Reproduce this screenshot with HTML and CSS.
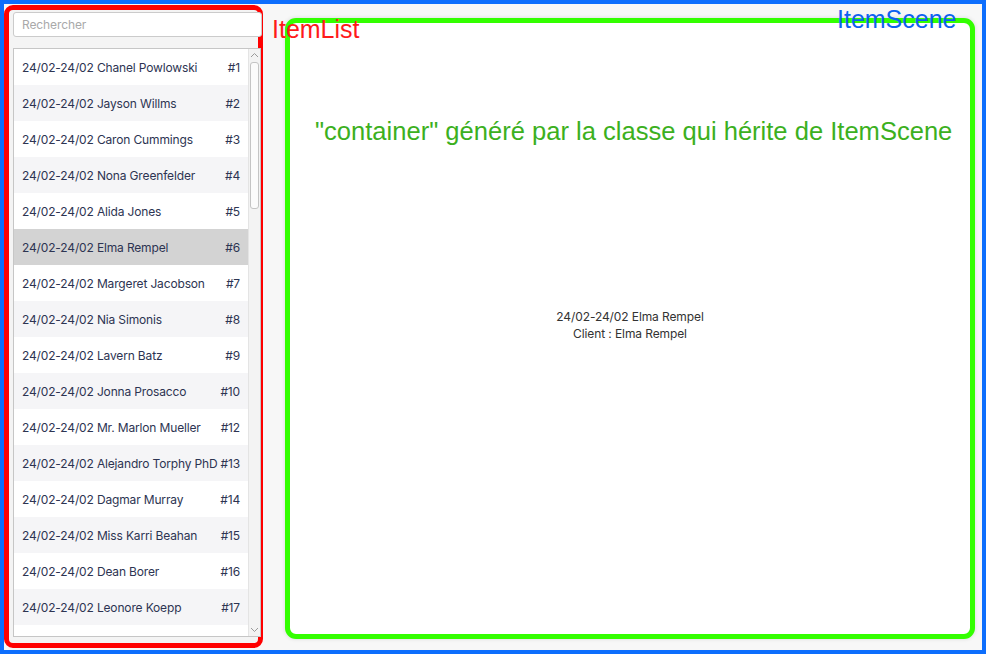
FILE: index.html
```html
<!DOCTYPE html>
<html lang="fr">
<head>
<meta charset="utf-8">
<title>ItemList / ItemScene</title>
<link rel="stylesheet" href="styles.css">
</head>
<body>
<div class="app">
  <aside class="itemlist">
    <div class="search"><span class="placeholder">Rechercher</span></div>
    <div class="listbox">
      <ul class="rows">
        <li class="row"><span class="name">24/02-24/02 Chanel Powlowski</span><span class="num">#1</span></li>
        <li class="row alt"><span class="name">24/02-24/02 Jayson Willms</span><span class="num">#2</span></li>
        <li class="row"><span class="name">24/02-24/02 Caron Cummings</span><span class="num">#3</span></li>
        <li class="row alt"><span class="name">24/02-24/02 Nona Greenfelder</span><span class="num">#4</span></li>
        <li class="row"><span class="name">24/02-24/02 Alida Jones</span><span class="num">#5</span></li>
        <li class="row selected"><span class="name">24/02-24/02 Elma Rempel</span><span class="num">#6</span></li>
        <li class="row"><span class="name">24/02-24/02 Margeret Jacobson</span><span class="num">#7</span></li>
        <li class="row alt"><span class="name">24/02-24/02 Nia Simonis</span><span class="num">#8</span></li>
        <li class="row"><span class="name">24/02-24/02 Lavern Batz</span><span class="num">#9</span></li>
        <li class="row alt"><span class="name">24/02-24/02 Jonna Prosacco</span><span class="num">#10</span></li>
        <li class="row"><span class="name">24/02-24/02 Mr. Marlon Mueller</span><span class="num">#12</span></li>
        <li class="row alt"><span class="name">24/02-24/02 Alejandro Torphy PhD</span><span class="num">#13</span></li>
        <li class="row"><span class="name">24/02-24/02 Dagmar Murray</span><span class="num">#14</span></li>
        <li class="row alt"><span class="name">24/02-24/02 Miss Karri Beahan</span><span class="num">#15</span></li>
        <li class="row"><span class="name">24/02-24/02 Dean Borer</span><span class="num">#16</span></li>
        <li class="row alt"><span class="name">24/02-24/02 Leonore Koepp</span><span class="num">#17</span></li>
      </ul>
      <div class="scrollbar">
        <svg class="arrow" width="9" height="6" viewBox="0 0 9 6"><path d="M1 5 L4.5 1.5 L8 5" fill="none" stroke="#9a9a9a" stroke-width="1"/></svg>
        <div class="thumb"></div>
        <div class="spacer"></div>
        <svg class="arrow" width="9" height="6" viewBox="0 0 9 6"><path d="M1 1 L4.5 4.5 L8 1" fill="none" stroke="#9a9a9a" stroke-width="1"/></svg>
      </div>
    </div>
  </aside>
  <main class="scene">
    <p class="container-note">"container" généré par la classe qui hérite de ItemScene</p>
    <div class="detail">
      <div>24/02-24/02 Elma Rempel</div>
      <div>Client : Elma Rempel</div>
    </div>
  </main>
  <span class="label label-list">ItemList</span>
  <span class="label label-scene">ItemScene</span>
</div>
</body>
</html>
```

FILE: styles.css
```css
* { box-sizing: border-box; }
html, body {
  margin: 0;
  padding: 0;
  background: #ffffff;
}
.app {
  position: relative;
  width: 986px;
  height: 654px;
  border: 4px solid #0d6efd;
  background: #f7f7f7;
  display: flex;
  align-items: flex-start;
  padding-top: 1px;
  gap: 22px;
}
.itemlist {
  width: 259px;
  height: 643px;
  border: 5px solid #ff0000;
  border-radius: 9px;
  background: #f4f4f4;
  padding: 2px 0 0 4px;
  display: flex;
  flex-direction: column;
  font-family: Inter, "Noto Sans", sans-serif;
}
.search {
  height: 25px;
  margin-right: -4px;
  border: 1px solid #cbcbcb;
  border-radius: 3px;
  background: #ffffff;
  padding-left: 8px;
  display: flex;
  align-items: center;
}
.placeholder {
  font-size: 12px;
  color: #a9a9a9;
  letter-spacing: -0.1px;
}
.listbox {
  margin-top: 11px;
  width: 248px;
  height: 589px;
  border: 1px solid #c6c6c6;
  background: #ffffff;
  display: flex;
  overflow: hidden;
}
.rows {
  list-style: none;
  margin: 0;
  padding: 0;
  width: 234px;
  flex: none;
}
.row {
  height: 36px;
  display: flex;
  align-items: center;
  justify-content: space-between;
  padding: 0 8px 0 8px;
  font-size: 12px;
  letter-spacing: -0.15px;
  color: #2d3452;
  white-space: nowrap;
  background: #ffffff;
}
.row.alt { background: #f5f5f7; }
.row.selected { background: #d3d3d3; }
.name { flex: none; }
.num { flex: none; }
.scrollbar {
  width: 12px;
  flex: none;
  background: #f3f3f3;
  border-left: 1px solid #e4e4e4;
  display: flex;
  flex-direction: column;
  align-items: center;
  padding: 3px 0 3px;
}
.arrow { flex: none; }
.thumb {
  margin-top: 4px;
  width: 9px;
  height: 147px;
  border: 1px solid #c4c4c4;
  border-radius: 3px;
  background: #fbfbfb;
}
.spacer { flex: 1; }
.scene {
  margin-top: 13px;
  width: 690px;
  height: 621px;
  border: 5px solid #33ff00;
  border-radius: 11px;
  background: #ffffff;
  box-shadow: 0 0 4px rgba(0,0,0,0.12);
  display: flex;
  flex-direction: column;
  align-items: flex-start;
}
.container-note {
  margin: 96px 0 0 25px;
  font-family: "Liberation Sans", Arial, sans-serif;
  font-size: 25.55px;
  line-height: 25px;
  color: #3cb01e;
  white-space: nowrap;
}
.detail {
  align-self: center;
  margin-top: 164px;
  text-align: center;
  font-family: Inter, "Noto Sans", sans-serif;
  font-size: 12px;
  letter-spacing: -0.1px;
  line-height: 17px;
  color: #333333;
}
.label {
  position: absolute;
  font-family: "Liberation Sans", Arial, sans-serif;
  font-size: 25px;
  line-height: 25px;
  white-space: nowrap;
}
.label-list {
  left: 268px;
  top: 13px;
  color: #ff1a1a;
}
.label-scene {
  left: 833px;
  top: 3px;
  color: #0d62f0;
}
```
